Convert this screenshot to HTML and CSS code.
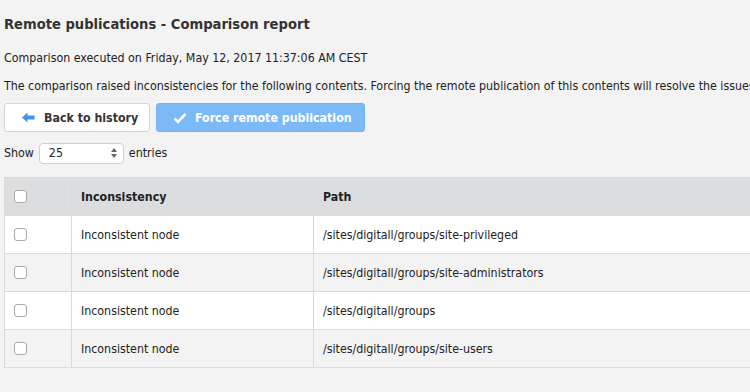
FILE: index.html
```html
<!DOCTYPE html>
<html lang="en">
<head>
    <meta charset="UTF-8">
    <title>Remote publications - Comparison report</title>
    <link rel="stylesheet" href="styles.css">
</head>
<body>
    <div class="page">
        <h1 class="title">Remote publications - Comparison report</h1>
        <p class="info">Comparison executed on Friday, May 12, 2017 11:37:06 AM CEST</p>
        <p class="info second">The comparison raised inconsistencies for the following contents. Forcing the remote publication of this contents will resolve the issues.</p>
        <div class="actions">
            <button class="btn btn-back">
                <svg width="13" height="11" viewBox="0 0 13 11"><path d="M0 5.5 L5.5 0.5 V3.5 H12.5 V7.5 H5.5 V10.5 Z" fill="#3f93e8"/></svg>
                Back to history
            </button>
            <button class="btn btn-force">
                <svg width="14" height="12" viewBox="0 0 14 12"><path d="M1.5 6.5 L5 10 L12.5 2" fill="none" stroke="#fff" stroke-width="2.6"/></svg>
                Force remote publication
            </button>
        </div>
        <div class="length">
            Show
            <span class="select">25<span class="arrows"><i class="up"></i><i class="down"></i></span></span>
            entries
        </div>
        <table class="grid">
            <thead>
                <tr>
                    <th class="check"><span class="box"></span></th>
                    <th class="kind">Inconsistency</th>
                    <th>Path</th>
                </tr>
            </thead>
            <tbody>
                <tr>
                    <td class="check"><span class="box"></span></td>
                    <td>Inconsistent node</td>
                    <td>/sites/digitall/groups/site-privileged</td>
                </tr>
                <tr>
                    <td class="check"><span class="box"></span></td>
                    <td>Inconsistent node</td>
                    <td>/sites/digitall/groups/site-administrators</td>
                </tr>
                <tr>
                    <td class="check"><span class="box"></span></td>
                    <td>Inconsistent node</td>
                    <td>/sites/digitall/groups</td>
                </tr>
                <tr>
                    <td class="check"><span class="box"></span></td>
                    <td>Inconsistent node</td>
                    <td>/sites/digitall/groups/site-users</td>
                </tr>
            </tbody>
        </table>
    </div>
</body>
</html>
```
FILE: styles.css
```css
* {
    margin: 0;
    padding: 0;
    box-sizing: border-box;
}
html, body {
    overflow: hidden;
}
body {
    background: #f3f3f3;
    color: #222;
    font-family: "DejaVu Sans Condensed", "DejaVu Sans", sans-serif;
    font-size: 12.3px;
}
.page {
    padding: 14px 0 0 4px;
    width: 750px;
    overflow: hidden;
}
.title {
    font-size: 14.6px;
    font-weight: bold;
    color: #333;
    line-height: 20px;
}
.info {
    margin-top: 16px;
    line-height: 16px;
    white-space: nowrap;
}
.info.second {
    margin-top: 12px;
}
.actions {
    display: flex;
    gap: 6px;
    margin-top: 9px;
}
.btn {
    display: flex;
    align-items: center;
    height: 29px;
    border-radius: 3px;
    font-family: inherit;
    font-size: 12.3px;
    font-weight: bold;
}
.btn-back {
    width: 146px;
    padding-left: 17px;
    gap: 9px;
    background: #fff;
    border: 1px solid #d4d4d4;
    color: #333;
}
.btn-force {
    width: 209px;
    padding-left: 16px;
    gap: 8px;
    background: #7bb9f7;
    border: 1px solid #72b2f3;
    color: #fff;
}
.length {
    display: flex;
    align-items: center;
    gap: 5px;
    margin-top: 10px;
    height: 22px;
}
.select {
    display: flex;
    align-items: center;
    justify-content: space-between;
    width: 85px;
    height: 21px;
    padding: 0 6px 0 9px;
    background: #fff;
    border: 1px solid #cfcfcf;
    border-radius: 4px;
}
.arrows {
    display: flex;
    flex-direction: column;
    gap: 2px;
}
.arrows i {
    width: 0;
    height: 0;
    border-left: 3px solid transparent;
    border-right: 3px solid transparent;
}
.arrows .up {
    border-bottom: 4px solid #666;
}
.arrows .down {
    border-top: 4px solid #666;
}
.grid {
    margin-top: 13px;
    width: 860px;
    border-collapse: collapse;
    border: 1px solid #dadada;
}
.grid th, .grid td {
    height: 38px;
    text-align: left;
    padding: 0 9px;
    border-top: 1px solid #dadada;
    border-left: 1px solid #dadada;
}
.grid th {
    background: #dcdddf;
    font-weight: bold;
}
.grid tbody tr:nth-child(odd) {
    background: #fff;
}
.grid tbody tr:nth-child(even) {
    background: #f3f3f3;
}
.grid .check {
    width: 67px;
    padding-left: 9px;
}
.grid .kind {
    width: 242px;
}
.box {
    display: block;
    width: 13px;
    height: 13px;
    border: 1px solid #a9a9a9;
    border-radius: 3px;
    background: #fff;
}
```
